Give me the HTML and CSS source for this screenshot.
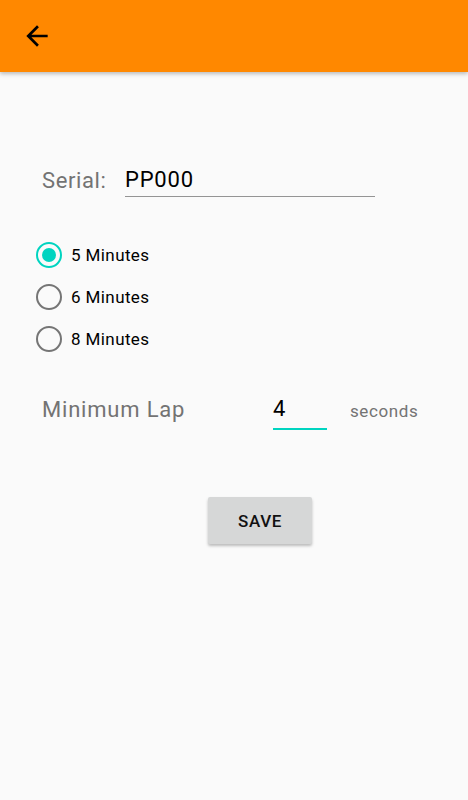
FILE: index.html
```html
<!DOCTYPE html>
<html lang="en">
<head>
    <meta charset="UTF-8">
    <title>Settings</title>
    <link rel="stylesheet" href="styles.css">
</head>
<body>
<div class="toolbar">
    <svg class="back" viewBox="0 0 24 24" width="32" height="32">
        <path d="M20 11H7.83l5.59-5.59L12 4l-8 8 8 8 1.41-1.41L7.83 13H20v-2z" fill="#000"/>
    </svg>
</div>
<div class="content">
    <div class="serial-row">
        <span class="serial-label">Serial:</span>
        <div class="serial-input">PP000</div>
    </div>
    <ul class="radios">
        <li class="radio-item"><span class="radio checked"></span>5 Minutes</li>
        <li class="radio-item"><span class="radio"></span>6 Minutes</li>
        <li class="radio-item"><span class="radio"></span>8 Minutes</li>
    </ul>
    <div class="lap-row">
        <span class="lap-label">Minimum Lap</span>
        <div class="lap-input">4</div>
        <span class="lap-unit">seconds</span>
    </div>
    <div class="actions">
        <button class="save">SAVE</button>
    </div>
</div>
</body>
</html>
```
FILE: styles.css
```css
*{
    margin: 0;
    padding: 0;
    box-sizing: border-box;
}
body{
    background-color: #fafafa;
    font-family: Roboto, "Noto Sans", sans-serif;
    width: 468px;
    height: 800px;
    overflow: hidden;
}
.toolbar{
    height: 72px;
    background-color: #ff8800;
    box-shadow: 0 2px 4px rgba(0,0,0,0.25);
    display: flex;
    align-items: center;
    padding-left: 21px;
    position: relative;
}
.back{
    display: block;
}
.content{
    padding-top: 91px;
}
.serial-row{
    display: flex;
    align-items: flex-end;
    padding-left: 42px;
}
.serial-label{
    font-size: 22px;
    letter-spacing: 0.6px;
    color: #737373;
    width: 83px;
    line-height: 33px;
}
.serial-input{
    width: 250px;
    font-size: 22px;
    letter-spacing: 0.8px;
    color: #000;
    line-height: 33px;
    border-bottom: 1px solid #949494;
}
.radios{
    list-style: none;
    padding-left: 36px;
    margin-top: 37px;
}
.radio-item{
    display: flex;
    align-items: center;
    height: 42px;
    font-size: 17px;
    letter-spacing: 0.4px;
    color: #000;
}
.radio{
    width: 26px;
    height: 26px;
    border: 2.5px solid #757575;
    border-radius: 50%;
    margin-right: 9px;
    position: relative;
}
.radio.checked{
    border-color: #00d4c0;
}
.radio.checked::after{
    content: "";
    position: absolute;
    left: 3.5px;
    top: 3.5px;
    width: 14px;
    height: 14px;
    border-radius: 50%;
    background-color: #00d4c0;
}
.lap-row{
    display: flex;
    align-items: flex-end;
    padding-left: 42px;
    margin-top: 31px;
}
.lap-label{
    font-size: 22px;
    letter-spacing: 0.8px;
    color: #737373;
    width: 231px;
    line-height: 36px;
    padding-bottom: 2px;
}
.lap-input{
    width: 54px;
    font-size: 22px;
    color: #000;
    line-height: 36px;
    padding-bottom: 1px;
    border-bottom: 2px solid #00d4c0;
}
.lap-unit{
    margin-left: 23px;
    font-size: 17px;
    letter-spacing: 0.6px;
    color: #737373;
    line-height: 36px;
    padding-bottom: 1px;
}
.actions{
    display: flex;
    padding-left: 208px;
    margin-top: 67px;
}
.save{
    width: 104px;
    height: 47px;
    border: none;
    border-radius: 2px;
    background-color: #d6d7d7;
    font-family: Roboto, sans-serif;
    font-weight: 500;
    font-size: 17px;
    letter-spacing: 0.6px;
    color: #111;
    box-shadow: 0 2px 3px rgba(0,0,0,0.25);
}
```
